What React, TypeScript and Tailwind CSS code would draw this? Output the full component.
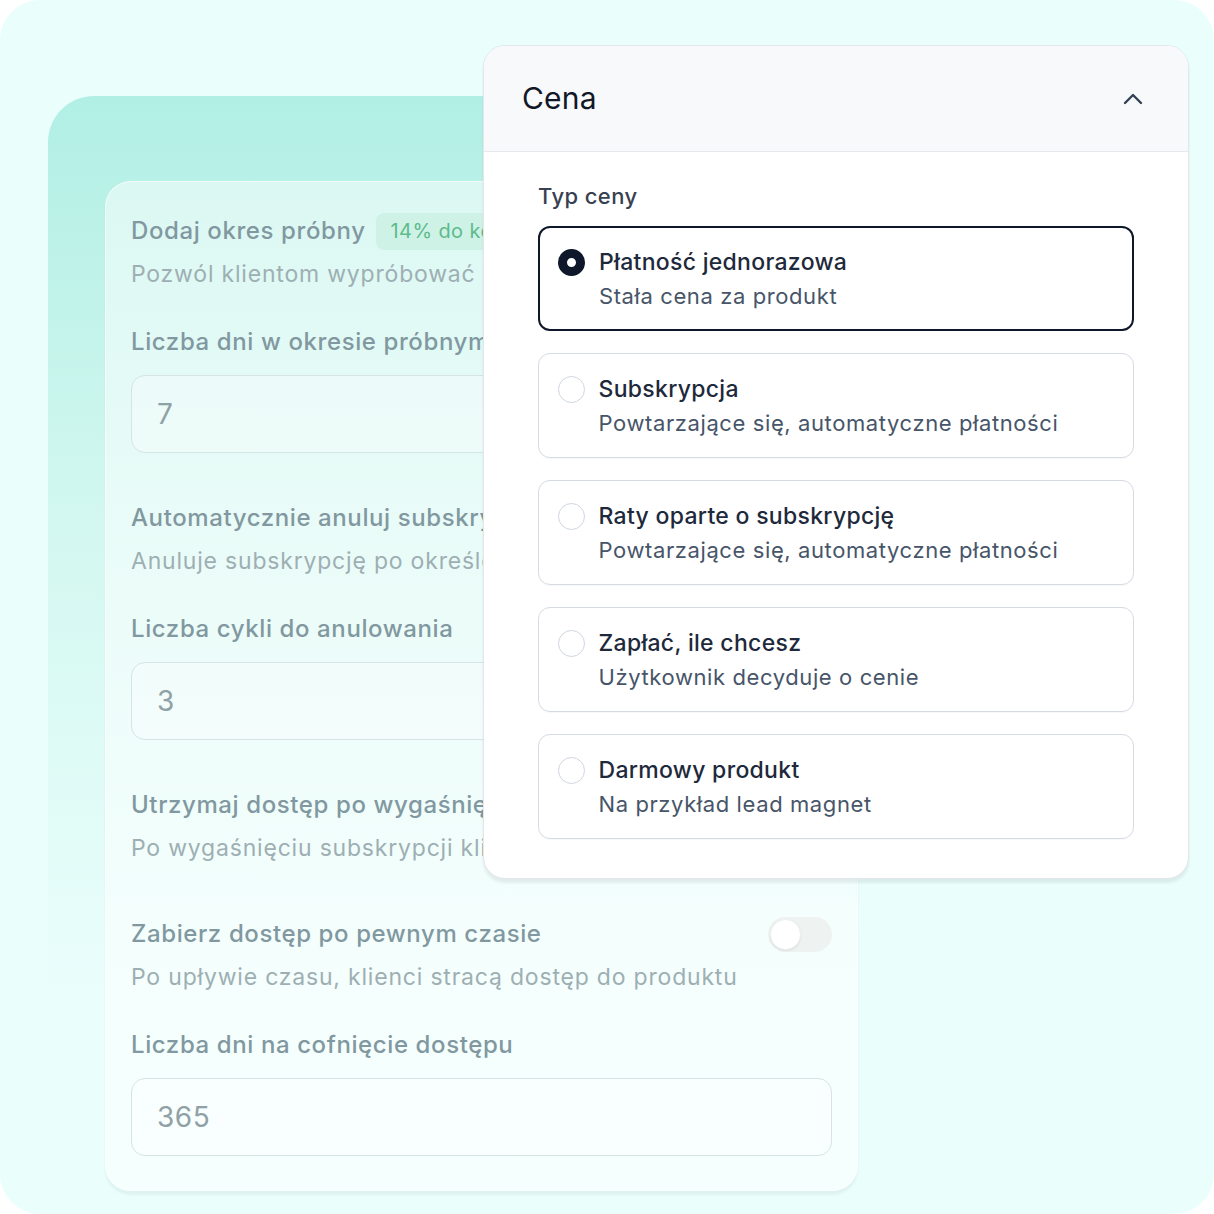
import React from "react";

type PriceOption = {
    title: string;
    subtitle: string;
};

const options: PriceOption[] = [
    { title: "Płatność jednorazowa", subtitle: "Stała cena za produkt" },
    { title: "Subskrypcja", subtitle: "Powtarzające się, automatyczne płatności" },
    { title: "Raty oparte o subskrypcję", subtitle: "Powtarzające się, automatyczne płatności" },
    { title: "Zapłać, ile chcesz", subtitle: "Użytkownik decyduje o cenie" },
    { title: "Darmowy produkt", subtitle: "Na przykład lead magnet" },
];

function Toggle() {
    return (
        <div className="w-[64px] h-[35px] rounded-full bg-[#eef3f2] p-[2px] flex items-center shrink-0">
            <div className="w-[31px] h-[31px] rounded-full bg-white shadow-[0_1px_2px_rgba(0,0,0,0.08)] border border-[#eef1f1]" />
        </div>
    );
}

function FieldInput({ value }: { value: string }) {
    return (
        <div className="mt-[17px] h-[78px] rounded-[14px] border-[1.5px] border-[#d6e4e4] bg-white/30 flex items-center px-[25px] text-[28px] tracking-[0.5px] text-[#8fa1a5]">
            {value}
        </div>
    );
}

function SettingHead({ title, desc, badge }: { title: string; desc: string; badge?: string }) {
    return (
        <div>
            <div className="flex items-center justify-between h-[32px]">
                <div className="flex items-center gap-[10px] min-w-0">
                    <span className="text-[24px] leading-[32px] font-medium tracking-[0.6px] text-[#8198a0] whitespace-nowrap">
                        {title}
                    </span>
                    {badge && (
                        <span className="h-[37px] px-[15px] rounded-[8px] bg-[#c8f1df]/70 text-[20px] leading-[37px] tracking-[0.4px] text-[#5fba8c] whitespace-nowrap">
                            {badge}
                        </span>
                    )}
                </div>
                <Toggle />
            </div>
            <p className="mt-[11px] text-[23px] leading-[32px] tracking-[0.8px] text-[#9eafb3] whitespace-nowrap">{desc}</p>
        </div>
    );
}

function FieldLabel({ text }: { text: string }) {
    return (
        <p className="mt-[36px] text-[24px] leading-[32px] font-medium tracking-[0.6px] text-[#8198a0] whitespace-nowrap">
            {text}
        </p>
    );
}

function BackCard() {
    return (
        <div className="w-[753px] rounded-[26px] bg-white/50 border border-white/60 shadow-[0_4px_2px_rgba(150,175,175,0.12)] px-[25px] pt-[33px] pb-[34px] overflow-hidden">
            <SettingHead
                title="Dodaj okres próbny"
                badge="14% do konwersji"
                desc="Pozwól klientom wypróbować produkt przed zakupem"
            />
            <FieldLabel text="Liczba dni w okresie próbnym" />
            <FieldInput value="7" />

            <div className="mt-[49px]">
                <SettingHead
                    title="Automatycznie anuluj subskrypcję"
                    desc="Anuluje subskrypcję po określonej liczbie cykli"
                />
            </div>
            <FieldLabel text="Liczba cykli do anulowania" />
            <FieldInput value="3" />

            <div className="mt-[49px]">
                <SettingHead
                    title="Utrzymaj dostęp po wygaśnięciu"
                    desc="Po wygaśnięciu subskrypcji klienci zachowują dostęp"
                />
            </div>

            <div className="mt-[54px]">
                <SettingHead
                    title="Zabierz dostęp po pewnym czasie"
                    desc="Po upływie czasu, klienci stracą dostęp do produktu"
                />
            </div>
            <FieldLabel text="Liczba dni na cofnięcie dostępu" />
            <FieldInput value="365" />
        </div>
    );
}

function Radio({ checked }: { checked: boolean }) {
    return checked ? (
        <span className="mt-[1px] w-[27px] h-[27px] rounded-full border-[9px] border-[#0f172a] bg-white shrink-0" />
    ) : (
        <span className="mt-[1px] w-[27px] h-[27px] rounded-full border-[1.5px] border-[#cfd6e0] bg-white shrink-0" />
    );
}

function PriceCard() {
    return (
        <div className="absolute left-[483px] top-[45px] w-[706px] rounded-[22px] bg-white border border-[#e3e7ec] shadow-[0_4px_3px_rgba(0,0,0,0.07)] overflow-hidden">
            <div className="h-[106px] bg-[#f8f9fb] border-b border-[#e6e9ee] flex items-center justify-between pl-[38px] pr-[45px]">
                <h2 className="text-[30px] font-normal text-[#111827] tracking-[0.2px]">Cena</h2>
                <svg width="20" height="12" viewBox="0 0 20 12" fill="none" className="mt-[1px]">
                    <polyline
                        points="2,10 10,2 18,10"
                        stroke="#334155"
                        strokeWidth="2.4"
                        strokeLinecap="round"
                        strokeLinejoin="round"
                    />
                </svg>
            </div>
            <div className="px-[54px] pt-[29px] pb-[39px]">
                <p className="text-[22px] leading-[30px] font-medium tracking-[0.4px] text-[#374151]">Typ ceny</p>
                <div className="mt-[15px] flex flex-col gap-[22px]">
                    {options.map((opt, i) => (
                        <div
                            key={opt.title}
                            className={
                                i === 0
                                    ? "h-[105px] rounded-[12px] border-2 border-[#0f172a] pl-[18px] pt-[20px] flex items-start gap-[14px]"
                                    : "h-[105px] rounded-[12px] border-[1.5px] border-[#d6dae3] pl-[18.5px] pt-[20.5px] flex items-start gap-[14px] shadow-[0_1px_1px_rgba(0,0,0,0.03)]"
                            }
                        >
                            <Radio checked={i === 0} />
                            <div>
                                <p className="text-[23px] leading-[28px] font-medium tracking-[0.3px] text-[#1e293b] whitespace-nowrap">
                                    {opt.title}
                                </p>
                                <p className="mt-[6px] text-[22px] leading-[28px] tracking-[0.6px] text-[#475569] whitespace-nowrap">
                                    {opt.subtitle}
                                </p>
                            </div>
                        </div>
                    ))}
                </div>
            </div>
        </div>
    );
}

export default function App() {
    return (
        <div
            className="relative w-[1214px] h-[1214px] rounded-[40px] bg-[#eafefc] overflow-hidden pl-[48px] pt-[96px]"
            style={{ fontFamily: "Inter, 'Noto Sans', sans-serif" }}
        >
            <div className="w-[810px] h-[1118px] rounded-tl-[46px] rounded-tr-[46px] bg-gradient-to-b from-[#b1efe4] via-[#d4f8f1] via-40% to-[#eafefc] to-80% pl-[57px] pt-[85px]">
                <BackCard />
            </div>
            <PriceCard />
        </div>
    );
}
